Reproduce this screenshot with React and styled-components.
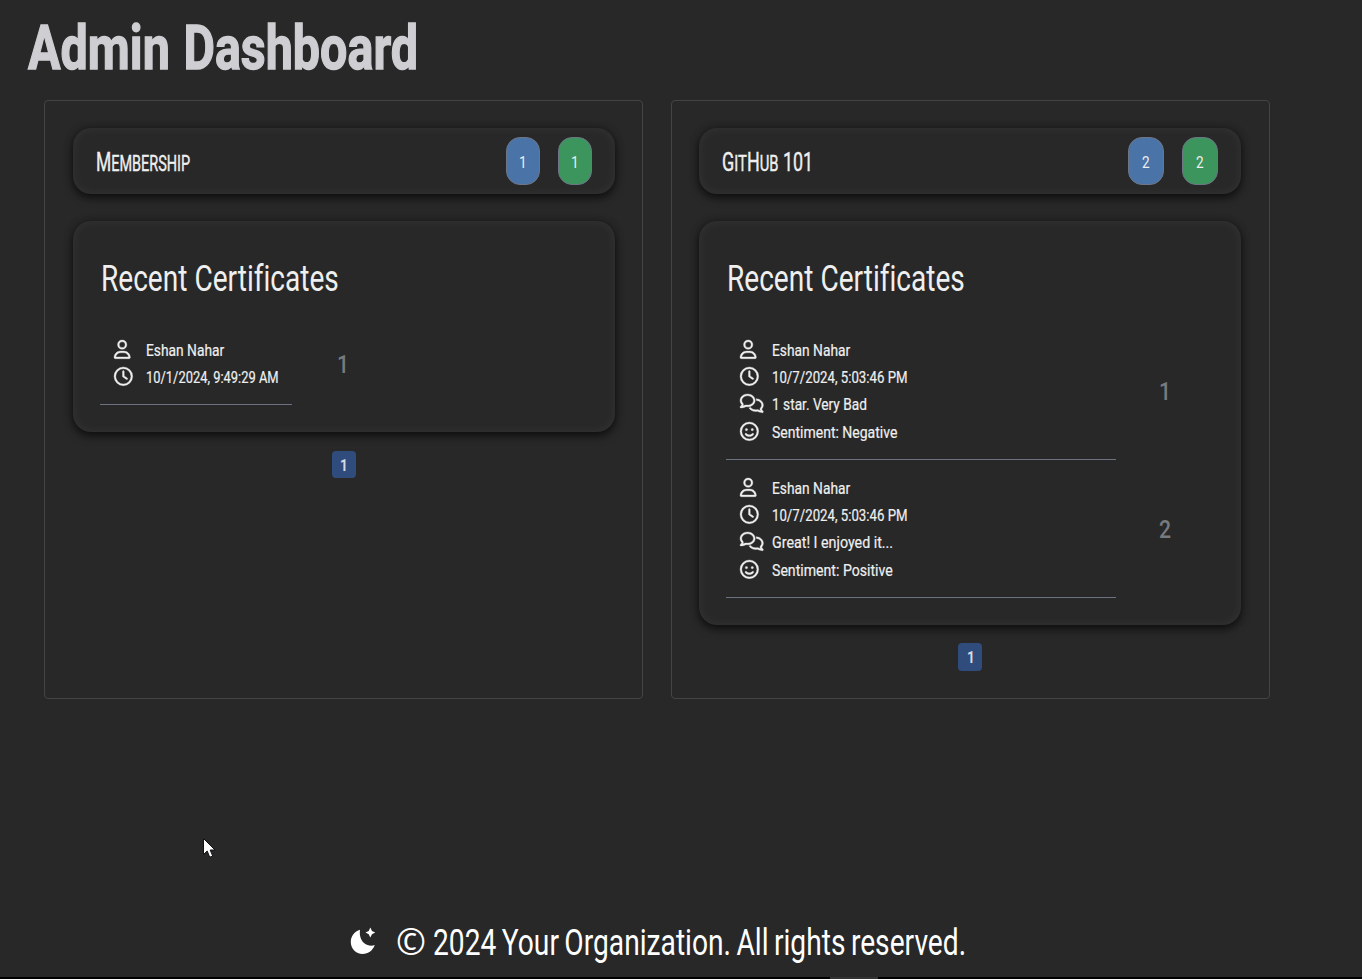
import React, { useLayoutEffect, useRef, useState } from "react";
import styled, { createGlobalStyle } from "styled-components";
import { FaRegUser, FaRegClock, FaRegComments, FaRegFaceSmile } from "react-icons/fa6";

const Global = createGlobalStyle`
  * { box-sizing: border-box; }
  html, body, #root { height: 100%; }
  body {
    margin: 0;
    overflow: hidden;
    background: #282828;
    color: #efefef;
    font-family: Roboto, "Liberation Sans", sans-serif;
    font-variant-ligatures: none;
  }
`;

const FitBox = styled.span`
  display: block;
  flex: none;
  white-space: nowrap;
`;

const FitText = styled.span`
  display: inline-block;
  transform-origin: 0 50%;
`;

/* Condenses its text horizontally to the given width. */
function Fit({ width, children }) {
  const ref = useRef(null);
  const [scale, setScale] = useState(1);
  useLayoutEffect(() => {
    setScale(width / ref.current.offsetWidth);
  }, [width]);
  return (
    <FitBox style={{ width }}>
      <FitText ref={ref} style={{ transform: `scaleX(${scale})` }}>{children}</FitText>
    </FitBox>
  );
}

const Page = styled.div`
  height: 979px;
  display: flex;
  flex-direction: column;
`;

const Title = styled.h1`
  margin: 0;
  padding: 11px 0 0 28px;
  height: 100px;
  color: #cfced2;
  font-size: 62px;
  font-weight: 700;
  line-height: 74px;
  word-spacing: 2px;
  -webkit-text-stroke: 1.4px #cfced2;
`;

const Panels = styled.main`
  display: grid;
  grid-template-columns: 598.6px 598.6px;
  gap: 28px;
  padding-left: 44.4px;
  height: 599px;
`;

const Panel = styled.section`
  display: flex;
  flex-direction: column;
  align-items: stretch;
  padding: 27px 27.4px;
  border: 1px solid #444;
  border-radius: 4px;
`;

const Card = styled.div`
  background: #282828;
  border-radius: 18px;
  box-shadow: 0 4px 9px rgba(0, 0, 0, 0.55), 0 0 8px rgba(0, 0, 0, 0.3),
    inset 0 0 12px rgba(255, 255, 255, 0.055);
`;

const HeaderCard = styled(Card)`
  display: flex;
  align-items: center;
  justify-content: space-between;
  height: 66px;
  padding: 0 23px 0 23px;
`;

const CourseName = styled.h2`
  margin: 0;
  padding-top: 3px;
  font-size: 26px;
  font-weight: 400;
  line-height: 30px;
  -webkit-text-stroke: 0.4px #efefef;
`;

const SmallCaps = styled.span`
  font-size: 21.5px;
  text-transform: uppercase;
`;

const Badges = styled.div`
  display: flex;
  gap: 18px;
`;

const Badge = styled.span`
  display: flex;
  align-items: center;
  justify-content: center;
  width: ${(p) => p.$width}px;
  height: 48px;
  padding: 1px 0 0;
  border: 1px solid #6d7586;
  border-radius: 14px;
  background: ${(p) => p.$color};
  font-size: 17px;
  font-weight: 400;
`;

const ListCard = styled(Card)`
  margin-top: 27px;
  padding: 27px;
`;

const ListTitle = styled.h3`
  margin: 0;
  height: 74px;
  padding: 9px 0 0 0.8px;
  font-size: 36.5px;
  font-weight: 400;
  line-height: 43px;
`;

const Entry = styled.div`
  display: flex;
  align-items: center;
`;

const Details = styled.div`
  width: ${(p) => p.$width}px;
  padding: 14px 0 13.4px 13.8px;
  border-bottom: 1px solid #6c7380;
`;

const Line = styled.div`
  display: flex;
  align-items: center;
  height: 27.4px;
  padding-top: 2px;
  font-size: 16.5px;
  line-height: 20px;
  -webkit-text-stroke: 0.2px #efefef;
`;

const ICONS = {
  user: { Icon: FaRegUser, width: 16.4 },
  time: { Icon: FaRegClock, width: 18.7 },
  comment: { Icon: FaRegComments, width: 23.4 },
  mood: { Icon: FaRegFaceSmile, width: 18.7 },
};

const IconCell = styled.span`
  display: flex;
  width: 32.2px;
  height: 22px;
  flex: none;
  svg {
    width: ${(p) => p.$width}px;
    height: 18.7px;
    overflow: visible;
    stroke-width: 9;
  }
`;

const Position = styled.div`
  display: flex;
  justify-content: flex-end;
  width: ${(p) => p.$width}px;
  padding-bottom: 1px;
  color: #777a7e;
  font-size: 26.5px;
  font-weight: 500;
`;

const PageButton = styled.button`
  display: flex;
  align-items: center;
  justify-content: center;
  align-self: center;
  width: 24px;
  height: 27.4px;
  margin: 18.4px 0 0;
  padding: 1px 0 0 1px;
  border: 0;
  border-radius: 4px;
  background: #2f4c7c;
  color: #d5dae0;
  font: 700 17px Roboto, sans-serif;
`;

const Footer = styled.footer`
  display: flex;
  align-items: center;
  margin-top: auto;
  height: 72px;
  padding-left: 350px;
  color: #fff;
  font-size: 36px;
  line-height: 42px;
`;

const MoonIcon = styled.svg`
  width: 26px;
  height: 28px;
  margin-right: 20px;
`;

const Copyright = styled.span`
  width: 36.6px;
  padding-top: 1px;
  font-family: "Open Sans", Roboto, sans-serif;
  font-size: 36px;
  font-weight: 400;
`;

const FooterText = styled.span`
  padding-top: 3px;
  word-spacing: -2px;
`;

const BottomEdge = styled.div`
  height: 2px;
  flex: none;
  padding-left: 830px;
  background: #000;
`;

const EdgeHandle = styled.div`
  width: 48px;
  height: 2px;
  background: #333;
`;

const Pointer = styled.svg`
  position: absolute;
  left: 202px;
  top: 837px;
  width: 14px;
  height: 22px;
`;

const COURSES = [
  {
    name: [["M", "embership"]],
    nameWidth: 94,
    count: 1,
    badgeWidth: 34,
    detailsWidth: 192,
    positionWidth: 57,
    entries: [[["user", "Eshan Nahar", 78.6], ["time", "10/1/2024, 9:49:29 AM", 133]]],
  },
  {
    name: [["G", "it"], ["H", "ub"], [" 101", ""]],
    nameWidth: 91,
    count: 2,
    badgeWidth: 36,
    detailsWidth: 390,
    positionWidth: 55,
    entries: [
      [["user", "Eshan Nahar", 78.6], ["time", "10/7/2024, 5:03:46 PM", 135.4], ["comment", "1 star. Very Bad", 94.6], ["mood", "Sentiment: Negative", 125.6]],
      [["user", "Eshan Nahar", 78.6], ["time", "10/7/2024, 5:03:46 PM", 135.4], ["comment", "Great! I enjoyed it...", 121], ["mood", "Sentiment: Positive", 120.6]],
    ],
  },
];

function Course({ course }) {
  return (
    <Panel>
      <HeaderCard>
        <CourseName>
          <Fit width={course.nameWidth}>
            {course.name.map(([big, small]) => (
              <React.Fragment key={big}>{big}{small && <SmallCaps>{small}</SmallCaps>}</React.Fragment>
            ))}
          </Fit>
        </CourseName>
        <Badges>
          <Badge $color="#4a73a8" $width={course.badgeWidth}><Fit width={8}>{course.count}</Fit></Badge>
          <Badge $color="#3b955c" $width={course.badgeWidth}><Fit width={8}>{course.count}</Fit></Badge>
        </Badges>
      </HeaderCard>
      <ListCard>
        <ListTitle><Fit width={237.6}>Recent Certificates</Fit></ListTitle>
        {course.entries.map((lines, i) => (
          <Entry key={i}>
            <Details $width={course.detailsWidth}>
              {lines.map(([kind, text, width]) => {
                const { Icon, width: iconWidth } = ICONS[kind];
                return (
                  <Line key={kind}>
                    <IconCell $width={iconWidth}><Icon /></IconCell>
                    <Fit width={width}>{text}</Fit>
                  </Line>
                );
              })}
            </Details>
            <Position $width={course.positionWidth}><Fit width={12}>{i + 1}</Fit></Position>
          </Entry>
        ))}
      </ListCard>
      <PageButton><Fit width={8}>1</Fit></PageButton>
    </Panel>
  );
}

export default function App() {
  return (
    <Page>
      <Global />
      <Title><Fit width={390}>Admin Dashboard</Fit></Title>
      <Panels>
        {COURSES.map((course) => <Course key={course.nameWidth} course={course} />)}
      </Panels>
      <Footer>
        <MoonIcon viewBox="0 0 26 28" fill="#fff">
          <path d="M10 2.800C4.600 4.600 0.800 9.200 0.800 15C0.800 21.800 6 27 12.600 27C18.400 27 23 23.200 24.700 18C22 19.200 17.500 19 14 16C10.500 13 9.300 7.800 10 2.800Z" />
          <path d="M20.300 0.600L22 4L25.200 5.600L22 7.200L20.300 10.600L18.700 7.200L15.500 5.600L18.700 4Z" />
        </MoonIcon>
        <Copyright>©</Copyright>
        <FooterText><Fit width={533}>2024 Your Organization. All rights reserved.</Fit></FooterText>
      </Footer>
      <BottomEdge><EdgeHandle /></BottomEdge>
      <Pointer viewBox="0 0 14 22">
        <path d="M1.500 1.500V17.500L5.200 14L7.700 20.200L10.700 19L8.200 13H13Z" fill="#fff" stroke="#11111a" strokeWidth="1" />
      </Pointer>
    </Page>
  );
}
